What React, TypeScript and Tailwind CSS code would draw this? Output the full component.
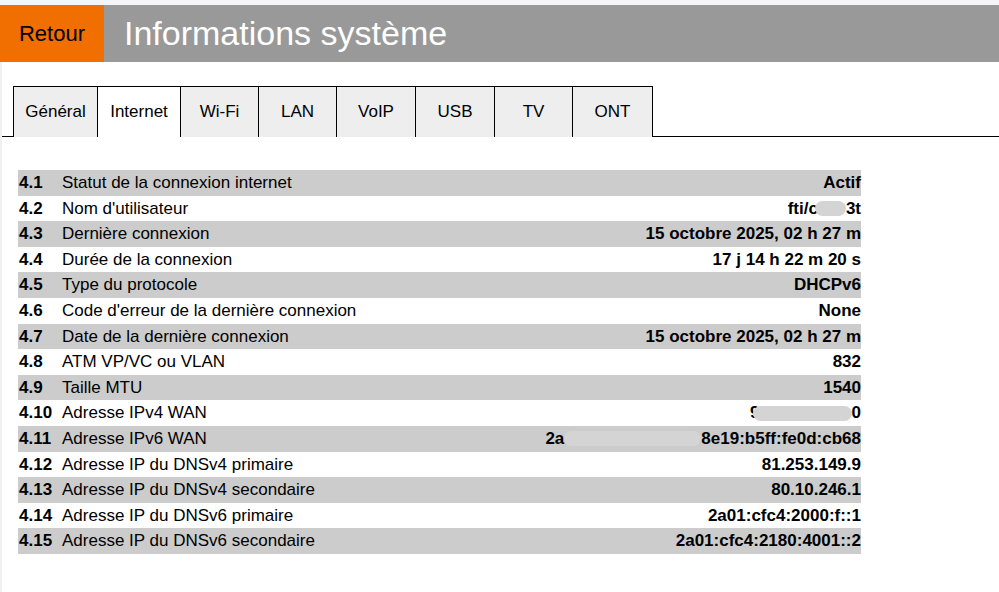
import React from 'react'

const tabs = [
  { label: 'Général', w: 'w-[84px]' },
  { label: 'Internet', w: 'w-[83px]', active: true },
  { label: 'Wi-Fi', w: 'w-[78px]' },
  { label: 'LAN', w: 'w-[78px]' },
  { label: 'VoIP', w: 'w-[79px]' },
  { label: 'USB', w: 'w-[79px]' },
  { label: 'TV', w: 'w-[78px]' },
  { label: 'ONT', w: 'w-[81px]', last: true },
]

function Mask({ w }: { w: string }) {
  return <span className={`inline-block h-[15px] ${w} rounded-full bg-[#d4d4d4] blur-[0.6px] align-middle`} />
}

const rows: { n: string; label: string; value: React.ReactNode }[] = [
  { n: '4.1', label: 'Statut de la connexion internet', value: 'Actif' },
  {
    n: '4.2',
    label: "Nom d'utilisateur",
    value: (
      <>
        fti/c
        <span className="-ml-[3px] inline-flex">
          <Mask w="w-[31px]" />
        </span>
        3t
      </>
    ),
  },
  { n: '4.3', label: 'Dernière connexion', value: '15 octobre 2025, 02 h 27 m' },
  { n: '4.4', label: 'Durée de la connexion', value: '17 j 14 h 22 m 20 s' },
  { n: '4.5', label: 'Type du protocole', value: 'DHCPv6' },
  { n: '4.6', label: "Code d'erreur de la dernière connexion", value: 'None' },
  { n: '4.7', label: 'Date de la dernière connexion', value: '15 octobre 2025, 02 h 27 m' },
  { n: '4.8', label: 'ATM VP/VC ou VLAN', value: '832' },
  { n: '4.9', label: 'Taille MTU', value: '1540' },
  {
    n: '4.10',
    label: 'Adresse IPv4 WAN',
    value: (
      <>
        9
        <span className="-ml-[7px] inline-flex">
          <Mask w="w-[99px]" />
        </span>
        0
      </>
    ),
  },
  {
    n: '4.11',
    label: 'Adresse IPv6 WAN',
    value: (
      <>
        2a
        <span className="inline-flex">
          <Mask w="w-[137px]" />
        </span>
        8e19:b5ff:fe0d:cb68
      </>
    ),
  },
  { n: '4.12', label: 'Adresse IP du DNSv4 primaire', value: '81.253.149.9' },
  { n: '4.13', label: 'Adresse IP du DNSv4 secondaire', value: '80.10.246.1' },
  { n: '4.14', label: 'Adresse IP du DNSv6 primaire', value: '2a01:cfc4:2000:f::1' },
  { n: '4.15', label: 'Adresse IP du DNSv6 secondaire', value: '2a01:cfc4:2180:4001::2' },
]

export default function App() {
  return (
    <div className="h-[592px] w-[999px] overflow-hidden bg-white font-['Liberation_Sans',Arial,sans-serif] text-black">
      {/* bandeau */}
      <div className="h-[5px] bg-[#f4f5f9]" />
      <header className="flex h-[57px]">
        <div className="flex w-[104px] items-center justify-center bg-[#f16e00] text-[22px]">Retour</div>
        <div className="flex flex-1 items-center bg-[#999999] pl-[20px] text-[34px] text-white">
          Informations système
        </div>
      </header>

      <div className="h-[530px] border-l-2 border-[#f0f0f0]">
        {/* Onglets */}
        <div className="flex pt-[24px]">
          <div className="h-[51px] w-[11px] border-b border-black" />
          {tabs.map((t) => (
            <div
              key={t.label}
              className={`flex h-[51px] ${t.w} items-center justify-center border-t border-l border-black text-[17px] ${
                t.last ? 'border-r' : ''
              } ${t.active ? 'bg-white' : 'bg-[#eeeeee]'}`}
            >
              {t.label}
            </div>
          ))}
          <div className="h-[51px] flex-1 border-b border-black" />
        </div>

        {/* Tableau */}
        <div className="ml-[16px] mt-[33px] w-[843px] text-[17px]">
          {rows.map((r, i) => (
            <div
              key={r.n}
              className={`flex h-[25.6px] items-center ${i % 2 === 0 ? 'bg-[#cccccc]' : 'bg-white'}`}
            >
              <div className="w-[44px] pl-[1px] font-bold">{r.n}</div>
              <div className="flex-1">{r.label}</div>
              <div className="flex items-center whitespace-pre font-bold">{r.value}</div>
            </div>
          ))}
        </div>
      </div>
    </div>
  )
}
